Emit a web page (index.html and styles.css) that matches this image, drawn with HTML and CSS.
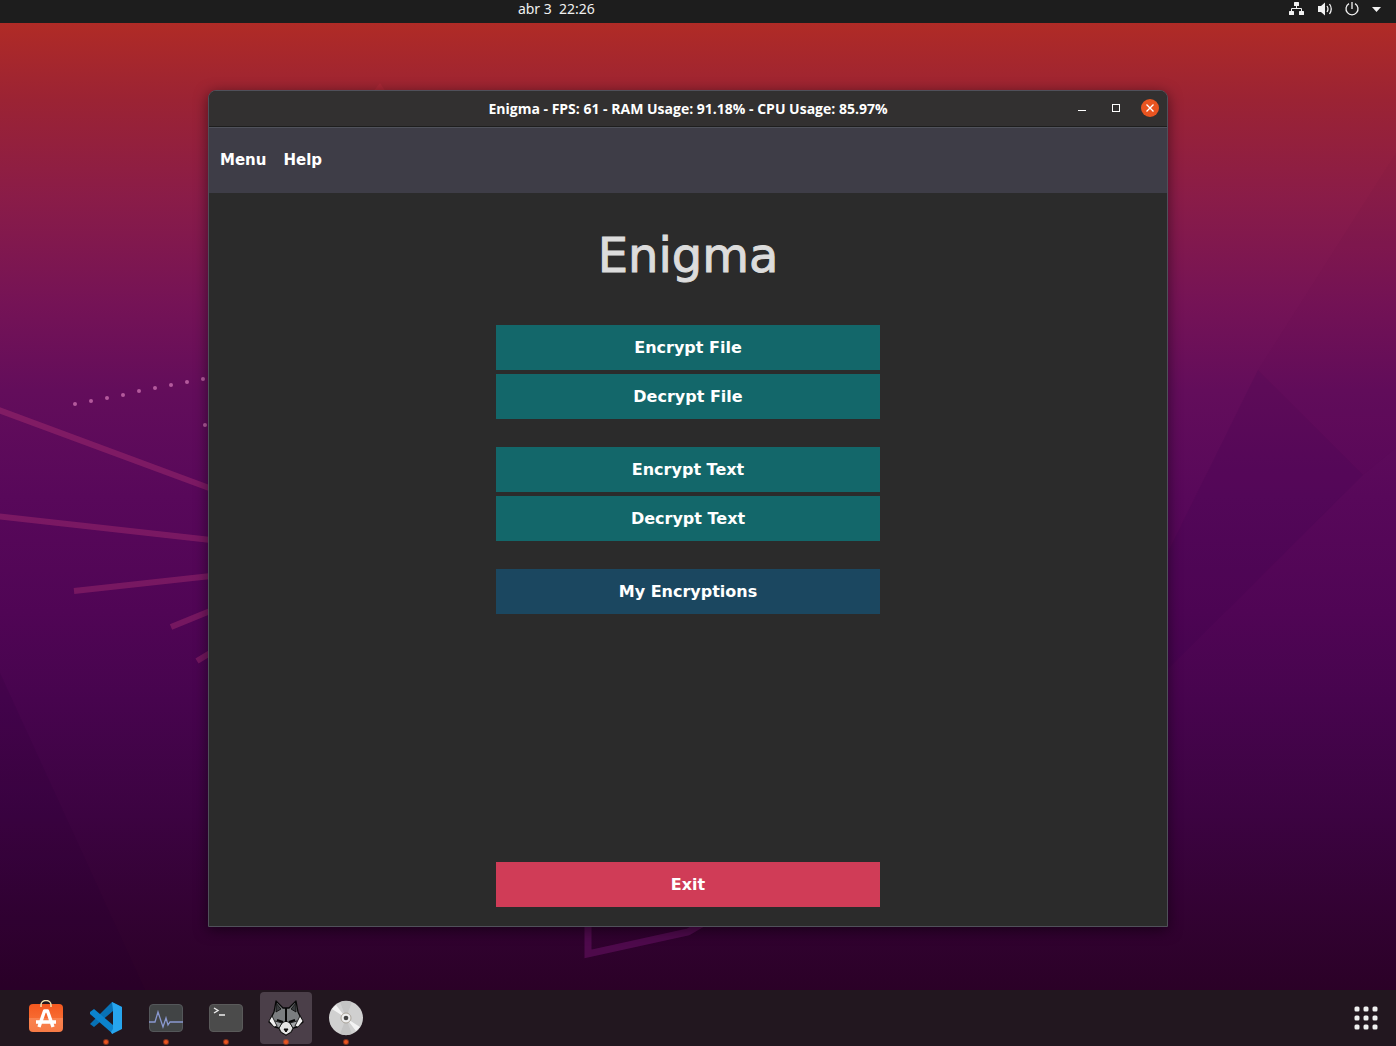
FILE: index.html
```html
<!DOCTYPE html>
<html lang="en">
<head>
<meta charset="utf-8">
<title>Enigma</title>
<link rel="stylesheet" href="styles.css">
</head>
<body>
<header class="topbar">
  <time class="clock">abr 3&nbsp; 22:26</time>
  <div class="tray">
    <svg width="16" height="16" viewBox="0 0 16 16" fill="#f2f2f2"><rect x="6" y="1" width="5" height="4" rx=".5"/><rect x="1" y="10" width="5" height="4" rx=".5"/><rect x="11" y="10" width="5" height="4" rx=".5"/><path d="M3.500 10V7.500H13.500V10M8.500 5V7.500" fill="none" stroke="#f2f2f2"/></svg>
    <svg width="16" height="16" viewBox="0 0 16 16" fill="#f2f2f2"><path d="M2 5h3L9 1.500v13L5 11H2z"/><path d="M11 5q2 3 0 6M13.500 3q3.500 5 0 10" fill="none" stroke="#f2f2f2" stroke-width="1.300"/></svg>
    <svg width="16" height="16" viewBox="0 0 16 16" fill="none" stroke="#f2f2f2" stroke-width="1.300"><path d="M5 2.600a6 6 0 1 0 6 0M8 1v7"/></svg>
    <svg width="9" height="16" viewBox="0 0 9 16" fill="#f2f2f2"><path d="M0 6h9l-4.500 5z"/></svg>
  </div>
</header>

<main class="desktop">
  <svg class="wallpaper" viewBox="0 0 1396 967" preserveAspectRatio="xMidYMid slice" aria-hidden="true">
    <path d="M1168 529L1258 347 1363 452 1168 646z" fill="#32004a" opacity=".12"/>
    <path d="M1396 130L1258 347 1363 452 1396 425z" fill="#32004a" opacity=".03"/>
    <path d="M0 650L145 967H0z" fill="#200030" opacity=".1"/>
    <path d="M356 90L380 60 400 90z" fill="#c03040" opacity=".3"/>
    <g fill="none" stroke="#c63d78" stroke-opacity=".32" stroke-width="6">
      <path d="M-4 386L220 469M-4 493L220 518M74 568L220 552M171 604L220 584M197 638L220 624"/>
    </g>
    <path d="M588 890V931L688 909 712 895" fill="none" stroke="#60105c" stroke-opacity=".65" stroke-width="7"/>
    <g fill="#b45a9c">
      <circle cx="75" cy="381" r="2"/><circle cx="91" cy="378" r="2"/><circle cx="107" cy="375" r="2"/><circle cx="123" cy="372" r="2"/><circle cx="139" cy="368" r="2"/><circle cx="155" cy="365" r="2"/><circle cx="171" cy="362" r="2"/><circle cx="187" cy="359" r="2"/><circle cx="203" cy="356" r="2"/><circle cx="205" cy="402" r="2"/>
    </g>
  </svg>

  <section class="window">
    <div class="titlebar">
      <div class="caption">Enigma - FPS: 61 - RAM Usage: 91.18% - CPU Usage: 85.97%</div>
      <div class="controls">
        <button class="control" aria-label="Minimize"><svg width="18" height="18" viewBox="0 0 18 18"><path d="M5 11.500h8" stroke="#fff"/></svg></button>
        <button class="control" aria-label="Maximize"><svg width="18" height="18" viewBox="0 0 18 18"><rect x="5.500" y="5.500" width="7" height="7" fill="none" stroke="#fff"/></svg></button>
        <button class="control close" aria-label="Close"><svg width="18" height="18" viewBox="0 0 18 18"><path d="M5.500 5.500l7 7M12.500 5.500l-7 7" stroke="#fff" stroke-width="1.400"/></svg></button>
      </div>
    </div>
    <nav class="menubar">
      <button class="menu">Menu</button>
      <button class="menu">Help</button>
    </nav>
    <div class="content">
      <h1 class="heading">Enigma</h1>
      <div class="group">
        <button class="action">Encrypt File</button>
        <button class="action">Decrypt File</button>
      </div>
      <div class="group">
        <button class="action">Encrypt Text</button>
        <button class="action">Decrypt Text</button>
      </div>
      <div class="group">
        <button class="action browse">My Encryptions</button>
      </div>
      <button class="action exit">Exit</button>
    </div>
  </section>
</main>

<footer class="dock">
  <button class="app" aria-label="Software">
    <svg width="36" height="36" viewBox="0 0 36 36"><defs><linearGradient id="bag" x2="0" y2="1"><stop stop-color="#f4581f"/><stop offset=".5" stop-color="#f76a30"/><stop offset=".5" stop-color="#f98350"/><stop offset="1" stop-color="#f77a45"/></linearGradient></defs><rect x="1" y="4" width="34" height="28" rx="4" fill="url(#bag)"/><path d="M13 7V5a5 4.500 0 0 1 10 0v2" fill="none" stroke="#eedfae" stroke-width="1.500"/><path d="M11 27L16.500 11h3L25 27M8 22h20" fill="none" stroke="#fff" stroke-width="3.400" stroke-linejoin="round"/></svg>
  </button>
  <button class="app running" aria-label="Code editor">
    <svg width="36" height="36" viewBox="0 0 36 36"><path d="M2 24L24 2 34 7 25 11 6 27z" fill="#0871b5"/><path d="M2 12L6 9 25 25V34L2 14z" fill="#0c83cd"/><path d="M24 2L34 7V29L24 34 23 32 25 29V10z" fill="#27a5ee"/></svg>
  </button>
  <button class="app running" aria-label="System monitor">
    <svg width="36" height="36" viewBox="0 0 36 36"><rect x="1.500" y="4.500" width="33" height="27" rx="3.500" fill="#414445" stroke="#54575a"/><path d="M1 22H7L10 12 15 27 18 18 20 25 22 22H35" fill="none" stroke="#8998cf" stroke-width="1.300"/></svg>
  </button>
  <button class="app running" aria-label="Terminal">
    <svg width="36" height="36" viewBox="0 0 36 36"><rect x="1.500" y="4.500" width="33" height="27" rx="3.500" fill="#4b4b4b" stroke="#5a5a5a"/><path d="M6 8l4 2.500L6 13M11 15h6" fill="none" stroke="#eee" stroke-width="1.400"/></svg>
  </button>
  <button class="app running active" aria-label="Enigma">
    <svg width="36" height="36" viewBox="0 0 36 36" stroke="#080808" stroke-linejoin="round"><path d="M8 1L15 8H21L28 1 30 12 35 22 29 27 25 28 23 32 18 35 13 32 11 28 7 27 1 22 6 12z" fill="#7b7e80" stroke-width="1.300"/><path d="M8 3L13 9 8 12zM28 3L23 9 28 12z" fill="#393c3e" stroke-width=".8"/><path d="M4 16L9 26 6 27 1 21zM32 16L27 26 30 27 35 21z" fill="#f0f0f0" stroke-width=".8"/><path d="M18 21L14 23 11 28 13 32 18 35 23 32 25 28 22 23z" fill="#e4e4e4" stroke-width=".8"/><path d="M7 21L14 23 11 28M29 21L22 23 25 28" fill="#a2a5a7" stroke-width=".8"/><path d="M18 8V22M9 20L15 22M27 20L21 22" fill="none" stroke-width="2"/><path d="M16 29h4l-2 3z" fill="#111"/></svg>
  </button>
  <button class="app running" aria-label="Disc">
    <svg width="36" height="36" viewBox="0 0 36 36"><circle cx="18" cy="18" r="17" fill="#d0d0d0"/><path d="M18 18L4 9 8 5zM18 18L32 27 28 31z" fill="#f3f3f3"/><path d="M18 18L12 2A17 17 0 0 1 24 2zM18 18L12 34A17 17 0 0 0 24 34z" fill="#c4c4c4"/><circle cx="18" cy="18" r="5" fill="#eee" stroke="#aaa49a"/><circle cx="18" cy="18" r="2.300" fill="#444"/></svg>
  </button>
  <button class="app launcher" aria-label="Show applications">
    <svg width="36" height="36" viewBox="0 0 36 36" fill="#f0f0f0"><g id="dots"><rect x="6.500" y="6.500" width="5" height="5" rx="1.500"/><rect x="15.500" y="6.500" width="5" height="5" rx="1.500"/><rect x="24.500" y="6.500" width="5" height="5" rx="1.500"/></g><use href="#dots" y="9"/><use href="#dots" y="18"/></svg>
  </button>
</footer>
</body>
</html>
```

FILE: styles.css
```css
* { box-sizing: border-box; }

body {
  margin: 0;
  min-height: 100vh;
  display: flex;
  flex-direction: column;
  background: #22171f;
  color: #fff;
  font-family: "DejaVu Sans", sans-serif;
}

button {
  margin: 0;
  padding: 0;
  border: 0;
  background: none;
  color: inherit;
  font: inherit;
}

svg { display: block; }

.topbar {
  height: 23px;
  display: flex;
  justify-content: space-between;
  background: #1d1d1d;
  font: 14px/18px "Noto Sans", sans-serif;
}

.clock {
  width: 80%;
  padding-right: 4px;
  text-align: center;
  color: #f0f0f0;
}

.tray {
  display: flex;
  gap: 12px;
  padding: 1px 15px 0 0;
}

.desktop {
  position: relative;
  flex: 1;
  display: flex;
  padding: 67px 228px 63px 208px;
  background: linear-gradient(#b02b26 0, #9b2334 8%, #8a1c48 18%, #751356 29%, #630d5b 38%, #58085a 49%, #500555 61%, #47044e 70%, #3c0341 82%, #2b0127 100%);
}

.wallpaper {
  position: absolute;
  inset: 0;
  width: 100%;
  height: 100%;
}

.window {
  position: relative;
  flex: 1;
  display: flex;
  flex-direction: column;
  border: 1px solid #50505a;
  border-radius: 8px 8px 0 0;
  background: #2b2b2b;
  box-shadow: 0 3px 14px rgba(0, 0, 0, .5);
}

.titlebar {
  height: 36px;
  display: grid;
  grid-template-columns: 1fr auto 1fr;
  align-items: center;
  border-bottom: 1px solid #1e1e1e;
  border-radius: 7px 7px 0 0;
  background: #323030;
}

.caption {
  grid-column: 2;
  font: bold 14px/20px "Open Sans", sans-serif;
}

.controls {
  display: flex;
  justify-content: flex-end;
  gap: 16px;
  padding: 0 8px 2px 0;
}

.control {
  width: 18px;
  height: 18px;
  border-radius: 50%;
}

.close { background: #e95420; }

.menubar {
  height: 66px;
  display: flex;
  align-items: center;
  gap: 17px;
  padding: 0 11px 2px;
  border-top: 1px solid #50525b;
  background: #3e3d47;
  font-size: 15px;
  font-weight: bold;
}

.content {
  flex: 1;
  display: flex;
  flex-direction: column;
  align-items: center;
  padding: 32px 0 19px;
}

.heading {
  margin: 0 0 40px;
  font-size: 48px;
  font-weight: normal;
  line-height: 60px;
  color: #dcdcdc;
  -webkit-text-stroke: 1px #dcdcdc;
}

.group {
  width: 40%;
  display: flex;
  flex-direction: column;
  gap: 4px;
  margin-bottom: 28px;
}

.action {
  height: 45px;
  background: #13676a;
  font-size: 16px;
  font-weight: bold;
}

.browse { background: #1b4760; }

.exit {
  width: 40%;
  margin-top: auto;
  background: #d03c57;
}

.dock {
  height: 56px;
  display: flex;
  align-items: flex-start;
  gap: 8px;
  padding: 2px 4px 2px 20px;
  background: #22171f;
}

.app {
  position: relative;
  width: 52px;
  height: 52px;
  display: grid;
  place-items: center;
  border-radius: 4px;
}

.active { background: #4b3f49; }

.running::after {
  content: "";
  position: absolute;
  bottom: 0;
  left: 24px;
  width: 4px;
  height: 4px;
  border-radius: 50%;
  background: #e95420;
  box-shadow: 0 0 0 1px rgba(233, 84, 32, .5);
}

.launcher { margin-left: auto; }
```
